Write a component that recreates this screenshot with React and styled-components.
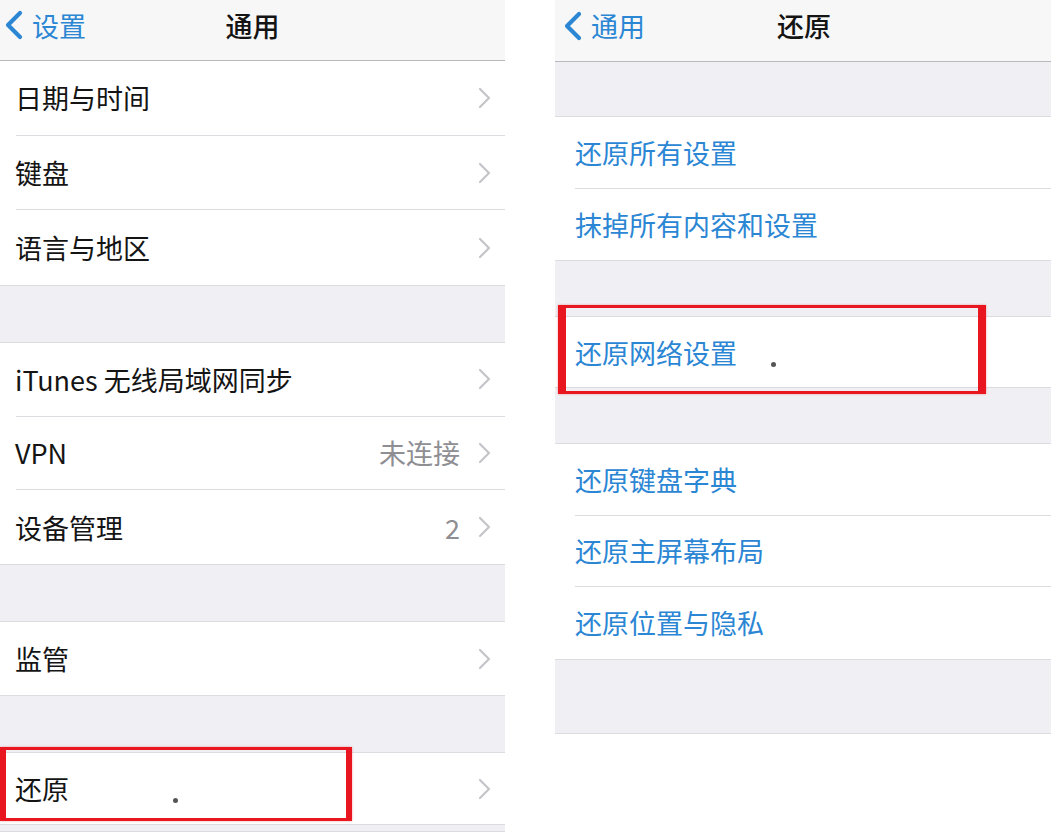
import React from 'react';
import styled, { createGlobalStyle } from 'styled-components';

const COLORS = {
  text: '#141414',
  blue: '#2b86d4',
  gray: '#8e8e93',
  chevron: '#c4c4c9',
  group: '#efeff4',
  nav: '#f7f7f8',
  line: '#dcdce0',
  navLine: '#b9b9bd',
  red: '#e8161e',
};

const GlobalStyle = createGlobalStyle`
  html, body {
    margin: 0;
    padding: 0;
    background: #ffffff;
  }
  body {
    font-family: "Noto Sans CJK SC", "Noto Sans", "Liberation Sans", sans-serif;
    -webkit-font-smoothing: antialiased;
  }
`;

const Page = styled.div`
  display: flex;
  width: 1051px;
  height: 832px;
  overflow: hidden;
  background: #ffffff;
`;

const Screen = styled.div`
  display: flex;
  flex-direction: column;
  width: ${({ width }) => width}px;
  margin-left: ${({ offset }) => offset || 0}px;
  flex-shrink: 0;
`;

const NavBar = styled.div`
  position: relative;
  display: flex;
  align-items: center;
  justify-content: center;
  height: 62px;
  padding-bottom: 10px;
  box-sizing: border-box;
  background: ${COLORS.nav};
  border-bottom: 1px solid ${COLORS.navLine};
`;

const BackButton = styled.div`
  position: absolute;
  left: ${({ left }) => left}px;
  top: 0;
  bottom: 10px;
  display: flex;
  align-items: center;
  gap: 8px;
  color: ${COLORS.blue};
  font-size: 27px;
  line-height: 1;
`;

const NavTitle = styled.div`
  margin-left: ${({ shift }) => shift || 0}px;
  font-size: 27px;
  font-weight: 500;
  color: ${COLORS.text};
  line-height: 1;
`;

const Gap = styled.div`
  height: ${({ h }) => h}px;
  background: ${COLORS.group};
  border-bottom: 1px solid ${COLORS.line};
`;

const Group = styled.div`
  background: #ffffff;
  border-bottom: 1px solid ${COLORS.line};
`;

const Row = styled.div`
  position: relative;
  display: flex;
  align-items: center;
  height: ${({ h }) => h}px;
  padding-left: ${({ inset }) => inset}px;
  padding-right: 14px;
  box-sizing: border-box;
`;

const RowBody = styled.div`
  flex: 1;
  display: flex;
  align-items: center;
  height: 100%;
  border-bottom: ${({ last }) => (last ? 'none' : `1px solid ${COLORS.line}`)};
  box-sizing: border-box;
  margin-right: -14px;
  padding-right: 14px;
`;

const Label = styled.span`
  flex: 1;
  font-size: 27px;
  line-height: 1;
  margin-left: ${({ action }) => (action ? 0 : -1)}px;
  color: ${({ action }) => (action ? COLORS.blue : COLORS.text)};
`;

const Detail = styled.span`
  font-size: 27px;
  line-height: 1;
  color: ${COLORS.gray};
  margin-right: 18px;
`;

const Dot = styled.span`
  display: inline-block;
  width: 5px;
  height: 5px;
  border-radius: 50%;
  background: #555;
  margin-left: ${({ gap }) => gap}px;
  vertical-align: middle;
  position: relative;
  top: 8px;
`;

const Highlight = styled.div`
  position: absolute;
  left: ${({ x }) => x}px;
  top: ${({ y }) => y}px;
  width: ${({ w }) => w}px;
  height: ${({ h }) => h}px;
  box-sizing: border-box;
  border: 3px solid ${COLORS.red};
  border-left-width: ${({ side }) => side}px;
  border-right-width: ${({ side }) => side}px;
  box-shadow: 0 0 2px rgba(232, 22, 30, 0.4);
  pointer-events: none;
`;

const Chevron = () => (
  <svg width="13" height="22" viewBox="0 0 13 22" fill="none">
    <path d="M2 2l9 9-9 9" stroke={COLORS.chevron} strokeWidth="2.2" strokeLinecap="round" strokeLinejoin="round" />
  </svg>
);

const BackChevron = () => (
  <svg width="20" height="30" viewBox="0 0 20 30" fill="none">
    <path d="M16 3L4 15l12 12" stroke={COLORS.blue} strokeWidth="4.2" strokeLinecap="round" strokeLinejoin="round" />
  </svg>
);

const SettingsRow = ({ label, detail, last, h, inset, action, arrow = true }) => (
  <Row h={h} inset={inset}>
    <RowBody last={last}>
      <Label action={action}>{label}</Label>
      {detail && <Detail>{detail}</Detail>}
      {arrow && <Chevron />}
    </RowBody>
  </Row>
);

const SettingsGroup = ({ items, h, inset, action, arrow }) => (
  <Group>
    {items.map((item, i) => (
      <SettingsRow
        key={item.label}
        label={item.label}
        detail={item.detail}
        last={i === items.length - 1}
        h={h}
        inset={inset}
        action={action}
        arrow={arrow}
      />
    ))}
  </Group>
);

const GeneralScreen = () => (
  <Screen width={505}>
    <NavBar>
      <BackButton left={4}>
        <BackChevron />
        <span>设置</span>
      </BackButton>
      <NavTitle>通用</NavTitle>
    </NavBar>
    <SettingsGroup
      h={74.6}
      inset={16}
      items={[{ label: '日期与时间' }, { label: '键盘' }, { label: '语言与地区' }]}
    />
    <Gap h={57} />
    <SettingsGroup
      h={73.7}
      inset={16}
      items={[
        { label: 'iTunes 无线局域网同步' },
        { label: 'VPN', detail: '未连接' },
        { label: '设备管理', detail: '2' },
      ]}
    />
    <Gap h={57} />
    <SettingsGroup h={73} inset={16} items={[{ label: '监管' }]} />
    <Gap h={57} />
    <Group>
      <Row h={71} inset={16}>
        <RowBody last>
          <Label>
            还原
            <Dot gap={104} />
          </Label>
          <Chevron />
        </RowBody>
        <Highlight x={0} y={-6} w={352} h={74} side={6} />
      </Row>
    </Group>
    <Gap h={6} />
  </Screen>
);

const ResetScreen = () => (
  <Screen width={496} offset={50}>
    <NavBar>
      <BackButton left={8}>
        <BackChevron />
        <span>通用</span>
      </BackButton>
      <NavTitle shift={2}>还原</NavTitle>
    </NavBar>
    <Gap h={54} />
    <SettingsGroup
      h={71.5}
      inset={20}
      action
      arrow={false}
      items={[{ label: '还原所有设置' }, { label: '抹掉所有内容和设置' }]}
    />
    <Gap h={55} />
    <Group>
      <Row h={70} inset={20}>
        <RowBody last>
          <Label action>
            还原网络设置
            <Dot gap={34} />
          </Label>
        </RowBody>
        <Highlight x={3} y={-12} w={428} h={89} side={8} />
      </Row>
    </Group>
    <Gap h={55} />
    <SettingsGroup
      h={71.5}
      inset={20}
      action
      arrow={false}
      items={[{ label: '还原键盘字典' }, { label: '还原主屏幕布局' }, { label: '还原位置与隐私' }]}
    />
    <Gap h={73} />
  </Screen>
);

const App = () => (
  <>
    <GlobalStyle />
    <Page>
      <GeneralScreen />
      <ResetScreen />
    </Page>
  </>
);

export default App;
